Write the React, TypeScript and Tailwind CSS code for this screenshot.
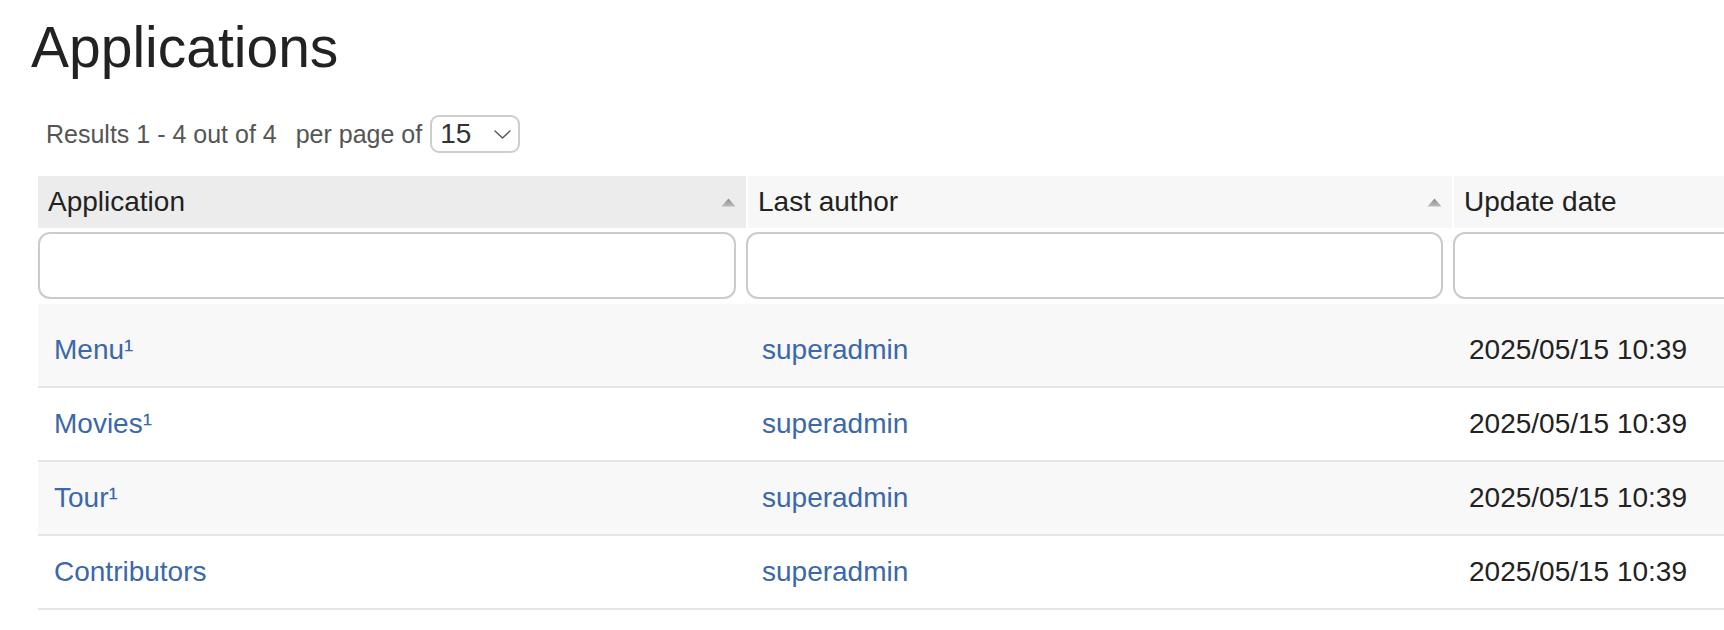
interface IApplicationRow {
  author: string;
  name: string;
  updatedAt: string;
}

interface IColumn {
  label: string;
  sortable: boolean;
}

const columns: IColumn[] = [
  { label: "Application", sortable: true },
  { label: "Last author", sortable: true },
  { label: "Update date", sortable: false },
];

const rows: IApplicationRow[] = [
  { name: "Menu¹", author: "superadmin", updatedAt: "2025/05/15 10:39" },
  { name: "Movies¹", author: "superadmin", updatedAt: "2025/05/15 10:39" },
  { name: "Tour¹", author: "superadmin", updatedAt: "2025/05/15 10:39" },
  { name: "Contributors", author: "superadmin", updatedAt: "2025/05/15 10:39" },
];

function SortArrow() {
  return (
    <svg width="15" height="9" viewBox="0 0 15 9" className="shrink-0">
      <defs>
        <linearGradient id="sortGrad" x1="0" y1="0" x2="0" y2="1">
          <stop offset="0%" stopColor="#8c8c8c" />
          <stop offset="100%" stopColor="#bcbcbc" />
        </linearGradient>
      </defs>
      <path d="M7.5 0.5 L14.5 8.5 L0.5 8.5 Z" fill="url(#sortGrad)" />
    </svg>
  );
}

function Chevron() {
  return (
    <svg width="17" height="9" viewBox="0 0 17 9" className="shrink-0">
      <polyline
        points="1,1 8.5,8 16,1"
        fill="none"
        stroke="#555"
        strokeWidth="1.4"
        strokeLinecap="round"
        strokeLinejoin="round"
      />
    </svg>
  );
}

function Pagination() {
  return (
    <div className="flex h-[38px] items-center pl-[46px] text-[25px] leading-[38px] text-[#555]">
      <span>Results 1 - 4 out of 4</span>
      <span className="ml-[19px]">per page of</span>
      <div className="ml-[8px] flex h-[38px] w-[90px] items-center rounded-[9px] border-2 border-[#cdcdcd] pl-[8px] pr-[7px]">
        <span className="flex-1 text-[28px] leading-[34px] text-[#333]">15</span>
        <Chevron />
      </div>
    </div>
  );
}

export default function App() {
  return (
    <div
      className="min-h-[630px] w-full overflow-hidden bg-white text-[#222]"
      style={{ fontFamily: '"Liberation Sans", Arial, Helvetica, sans-serif' }}
    >
      <h1 className="pl-[31px] pt-[15px] text-[57px] leading-[64px] font-normal">
        Applications
      </h1>

      <div className="mt-[36px]">
        <Pagination />
      </div>

      <div className="mt-[23px] w-[2200px] pl-[38px]">
        <div className="grid grid-cols-[708px_704px_700px] gap-x-[2px]">
          {columns.map((column, index) => (
            <div
              key={column.label}
              className={`flex h-[52px] items-center pl-[10px] pr-[10px] text-[28px] leading-[52px] ${
                index === 0 ? "bg-[#ececec]" : "bg-[#f7f7f7]"
              }`}
            >
              <span className="flex-1 whitespace-nowrap">{column.label}</span>
              {column.sortable && <SortArrow />}
            </div>
          ))}
        </div>

        <div className="mt-[4px] grid grid-cols-[698px_697px_697px] gap-x-[10px]">
          {columns.map((column) => (
            <input
              key={column.label}
              type="text"
              aria-label={column.label}
              className="h-[67px] w-full rounded-[12px] border-2 border-[#cbcbcb] bg-white outline-none"
            />
          ))}
        </div>

        <div className="mt-[5px]">
          {rows.map((row, index) => (
            <div
              key={row.name}
              className={`grid grid-cols-[710px_706px_1fr] border-b-2 border-[#e6e6e6] text-[28px] leading-[72px] ${
                index % 2 === 0 ? "bg-[#f8f8f8]" : "bg-white"
              } ${index === 0 ? "pt-[10px]" : ""}`}
            >
              <div className="pl-[16px]">
                <a className="text-[#3a68a9]" href="#">
                  {row.name}
                </a>
              </div>
              <div className="pl-[14px]">
                <a className="text-[#3a68a9]" href="#">
                  {row.author}
                </a>
              </div>
              <div className="pl-[15px] whitespace-nowrap">{row.updatedAt}</div>
            </div>
          ))}
        </div>
      </div>
    </div>
  );
}
